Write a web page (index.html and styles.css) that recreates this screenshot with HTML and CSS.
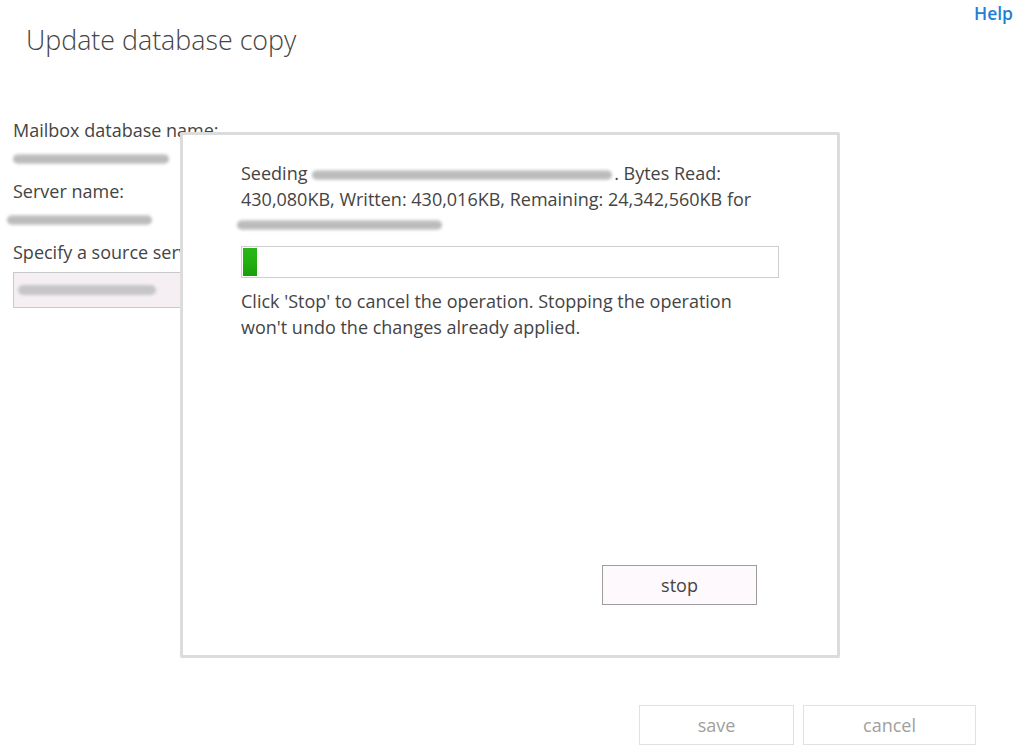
FILE: index.html
```html
<!DOCTYPE html>
<html>
<head>
<meta charset="utf-8">
<link rel="stylesheet" href="styles.css">
</head>
<body>
<div class="page">
  <header class="top">
    <h1 class="title">Update database copy</h1>
    <a class="help" href="#">Help</a>
  </header>
  <section class="form">
    <div class="label">Mailbox database name:</div>
    <div class="value"><span class="redact w156"></span></div>
    <div class="label">Server name:</div>
    <div class="value shift"><span class="redact w145"></span></div>
    <div class="label">Specify a source server:</div>
    <div class="input"><span class="redact w138 dim"></span></div>
  </section>
  <footer class="actions">
    <button class="btn save">save</button>
    <button class="btn cancel">cancel</button>
  </footer>
  <div class="dialog">
    <p class="msg">Seeding <span class="redact w300 inline"></span>. Bytes Read:<br>430,080KB, Written: 430,016KB, Remaining: 24,342,560KB for</p>
    <div class="redact-line"><span class="redact w205"></span></div>
    <div class="progress"><div class="fill" style="width:14px"></div></div>
    <p class="note">Click 'Stop' to cancel the operation. Stopping the operation won't undo the changes already applied.</p>
    <div class="dialog-actions">
      <button class="btn stop">stop</button>
    </div>
  </div>
</div>
</body>
</html>
```

FILE: styles.css
```css
* { box-sizing: border-box; }
html, body { margin: 0; padding: 0; background: #fff; }
body {
  font-family: "Open Sans", "Noto Sans", sans-serif;
  color: #444;
  font-size: 18px;
}
.page {
  position: relative;
  width: 1024px;
  height: 753px;
  overflow: hidden;
}
.top {
  display: flex;
  justify-content: space-between;
  align-items: flex-start;
  padding: 0 11px 0 26px;
}
.title {
  margin: 22px 0 0 0;
  font-weight: 300;
  font-size: 26.8px;
  line-height: 36px;
  color: #444;
}
.help {
  margin-top: 1px;
  color: #1e7fd6;
  text-decoration: none;
  font-size: 17.5px;
  font-weight: 600;
  line-height: 24px;
}
.form {
  padding: 59px 0 0 13px;
}
.label {
  line-height: 26px;
  height: 26px;
  white-space: nowrap;
}
.value {
  height: 35px;
  display: flex;
  align-items: center;
  padding-bottom: 3px;
}
.value.shift { margin-left: -6px; }
.redact {
  display: inline-block;
  height: 10px;
  border-radius: 5px;
  background: linear-gradient(#cdcdcd, #b6b6b6 50%, #cacaca);
  filter: blur(1.5px);
  vertical-align: middle;
}
.redact.dim { background: #c6c6c6; }
.w156 { width: 156px; }
.w145 { width: 145px; }
.w138 { width: 138px; }
.w300 { width: 300px; }
.w205 { width: 205px; }
.redact.inline { margin: 0 2px 0 0; }
.input {
  margin-top: 7px;
  width: 200px;
  height: 36px;
  border: 1px solid #c9c9c9;
  background: #f5eff3;
  display: flex;
  align-items: center;
  padding-left: 4px;
}
.dialog {
  position: absolute;
  left: 180px;
  top: 132px;
  width: 660px;
  height: 526px;
  background: #fff;
  border: 3px solid #dcdcdc;
  border-radius: 2px;
  padding: 25px 60px 0 58px;
  display: flex;
  flex-direction: column;
}
.msg, .note {
  margin: 0;
  line-height: 26px;
  max-width: 518px;
}
.redact-line {
  height: 26px;
  display: flex;
  align-items: center;
  margin-left: -4px;
}
.progress {
  margin-top: 8px;
  width: 538px;
  height: 32px;
  border: 1px solid #cfcfcf;
  padding: 1px;
}
.fill {
  height: 100%;
  background: linear-gradient(#2ab61a, #22b00f 50%, #1a9e0c);
}
.note { margin-top: 10px; }
.dialog-actions {
  margin-top: auto;
  margin-bottom: 50px;
  display: flex;
  justify-content: flex-end;
  padding-right: 20px;
}
.btn {
  font-family: inherit;
  font-size: 18px;
  cursor: pointer;
}
.stop {
  width: 155px;
  height: 40px;
  background: #fdf9fd;
  border: 1px solid #9d9d9d;
  color: #444;
}
.actions {
  position: absolute;
  left: 639px;
  top: 705px;
  display: flex;
  gap: 9px;
}
.save, .cancel {
  height: 40px;
  background: #fff;
  border: 1px solid #e1e1e1;
  color: #a0a0a0;
}
.save { width: 155px; }
.cancel { width: 173px; }
```
